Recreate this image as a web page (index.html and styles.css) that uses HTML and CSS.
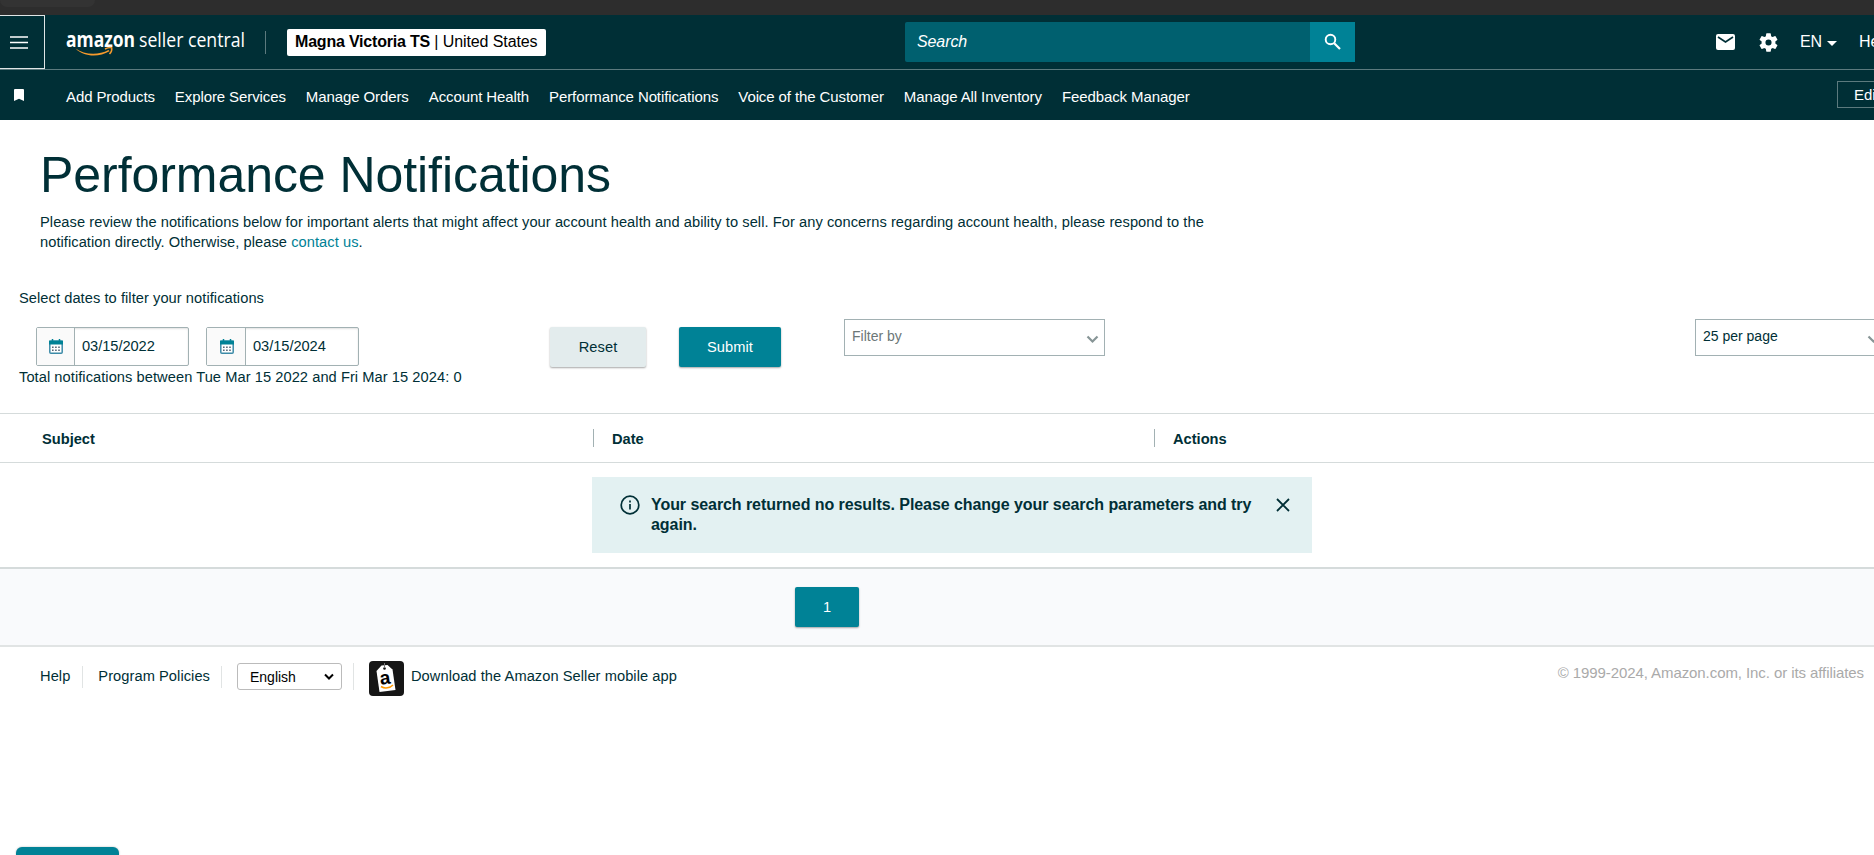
FILE: index.html
```html
<!DOCTYPE html>
<html lang="en">
<head>
    <meta charset="UTF-8">
    <meta name="viewport" content="width=device-width, initial-scale=1.0">
    <title>Performance Notifications</title>
    <link rel="stylesheet" href="styles.css">
</head>
<body>
    <div class="window-bar"><div class="window-tab"></div></div>

    <header>
        <div class="top-bar">
            <button class="menu-btn" aria-label="Menu">
                <svg width="18" height="13" viewBox="0 0 18 13"><path d="M0 1h18M0 6.500h18M0 12h18" stroke="#fff" stroke-width="1.600"/></svg>
            </button>
            <div class="logo">
                <svg width="182" height="34" viewBox="0 0 182 34">
                    <text class="logo-bold" x="0" y="19" textLength="69" lengthAdjust="spacingAndGlyphs">amazon</text>
                    <text class="logo-light" x="73" y="19" textLength="106" lengthAdjust="spacingAndGlyphs">seller central</text>
                    <path d="M9.500 20.500c9 6.500 23 7 33 1.500l1 1.300c-11 6.500-26 5.500-34-2.800z" fill="#f79a2c"/>
                    <path d="M39 21c3-1.500 5.500-1.700 6.700-1.200.4 2-.6 4.500-2.200 6.200" fill="none" stroke="#f79a2c" stroke-width="1.500"/>
                </svg>
            </div>
            <div class="logo-divider"></div>
            <div class="account"><b>Magna Victoria TS</b><span> | United States</span></div>
            <div class="search">
                <div class="search-input">Search</div>
                <button class="search-btn" aria-label="Search">
                    <svg width="18" height="18" viewBox="0 0 18 18" fill="none" stroke="#fff"><circle cx="6.500" cy="6.500" r="4.800" stroke-width="1.900"/><path d="M10.200 10.200l5.800 5.800" stroke-width="2.200"/></svg>
                </button>
            </div>
            <div class="tools">
                <svg class="mail" width="19" height="16" viewBox="0 0 19 16"><rect width="19" height="16" rx="2" fill="#fff"/><path d="M2 3l7.500 5L17 3" fill="none" stroke="#002f36" stroke-width="1.700"/></svg>
                <svg class="gear" width="23" height="23" viewBox="0 0 24 24"><path fill="#fff" d="M19.140 12.940c.04-.3.060-.61.060-.94s-.02-.64-.07-.94l2.030-1.580a.49.49 0 0 0 .12-.61l-1.920-3.320a.49.49 0 0 0-.59-.22l-2.390.96a7 7 0 0 0-1.620-.94l-.36-2.540a.48.48 0 0 0-.48-.41h-3.840a.48.48 0 0 0-.47.41l-.36 2.540c-.59.24-1.130.57-1.620.94l-2.390-.96a.49.49 0 0 0-.59.220L2.740 8.870a.49.49 0 0 0 .12.610l2.030 1.580c-.05.3-.09.63-.09.940s.02.640.070.940l-2.030 1.580a.49.490 0 0 0-.12.610l1.920 3.320c.12.220.37.290.59.220l2.390-.96c.5.380 1.030.7 1.620.940l.36 2.540c.05.24.24.410.480.410h3.840c.24 0 .44-.17.470-.41l.36-2.540c.59-.24 1.130-.56 1.620-.94l2.390.96c.22.080.470 0 .59-.22l1.920-3.320a.49.490 0 0 0-.12-.61zM12 15.200a3.200 3.200 0 1 1 0-6.400 3.200 3.200 0 0 1 0 6.400z"/></svg>
                <span class="lang">EN</span>
                <span class="caret"></span>
                <span class="help">Help</span>
            </div>
        </div>
        <div class="nav-bar">
            <svg class="bookmark" width="10" height="12" viewBox="0 0 10 12"><path d="M0 1q0-1 1-1h8q1 0 1 1v11L5 9.800 0 12z" fill="#fff"/></svg>
            <nav>
                <a>Add Products</a>
                <a>Explore Services</a>
                <a>Manage Orders</a>
                <a>Account Health</a>
                <a>Performance Notifications</a>
                <a>Voice of the Customer</a>
                <a>Manage All Inventory</a>
                <a>Feedback Manager</a>
            </nav>
            <button class="edit-btn">Edit</button>
        </div>
    </header>

    <main>
        <h1>Performance Notifications</h1>
        <p class="intro">Please review the notifications below for important alerts that might affect your account health and ability to sell. For any concerns regarding account health, please respond to the<br>notification directly. Otherwise, please <a>contact us</a>.</p>

        <p class="filter-label">Select dates to filter your notifications</p>
        <div class="filters">
            <div class="date-field">
                <span class="date-icon"><svg width="14" height="15" viewBox="0 0 14 15"><path d="M3.500 0v3M10.500 0v3" stroke="#008296" stroke-width="1.500"/><rect x=".8" y="2.300" width="12.400" height="11.900" rx="1" fill="#fff" stroke="#3d8ba8" stroke-width="1.500"/><path d="M0 1.500h14v4H0z" fill="#008296"/><path d="M3 8.300h8M3 11.200h8" stroke="#567" stroke-width="1.400" stroke-dasharray="1.600 1.500"/></svg></span>
                <span class="date-value">03/15/2022</span>
            </div>
            <div class="date-field date-to">
                <span class="date-icon"><svg width="14" height="15" viewBox="0 0 14 15"><path d="M3.500 0v3M10.500 0v3" stroke="#008296" stroke-width="1.500"/><rect x=".8" y="2.300" width="12.400" height="11.900" rx="1" fill="#fff" stroke="#3d8ba8" stroke-width="1.500"/><path d="M0 1.500h14v4H0z" fill="#008296"/><path d="M3 8.300h8M3 11.200h8" stroke="#567" stroke-width="1.400" stroke-dasharray="1.600 1.500"/></svg></span>
                <span class="date-value">03/15/2024</span>
            </div>
            <button class="btn reset">Reset</button>
            <button class="btn primary submit">Submit</button>
            <div class="dropdown filter-by">
                <span>Filter by</span>
                <svg width="13" height="9" viewBox="0 0 13 9"><path d="M1.500 1.500l5 5 5-5" fill="none" stroke="#879596" stroke-width="2.200"/></svg>
            </div>
            <div class="dropdown per-page">
                <span>25 per page</span>
                <svg width="13" height="9" viewBox="0 0 13 9"><path d="M1.500 1.500l5 5 5-5" fill="none" stroke="#879596" stroke-width="2.200"/></svg>
            </div>
        </div>
        <p class="total">Total notifications between Tue Mar 15 2022 and Fri Mar 15 2024: 0</p>

        <div class="table-head">
            <div class="col">Subject</div>
            <div class="col">Date</div>
            <div class="col">Actions</div>
        </div>
        <div class="table-body">
            <div class="alert">
                <svg class="info" width="20" height="20" viewBox="0 0 20 20" fill="none" stroke="#002f36"><circle cx="10" cy="10" r="8.800" stroke-width="1.700"/><path d="M10 9v5.500M10 5.500v2" stroke-width="1.700"/></svg>
                <p>Your search returned no results. Please change your search parameters and try<br>again.</p>
                <svg class="close" width="14" height="14" viewBox="0 0 14 14"><path d="M1 1l12 12M13 1L1 13" stroke="#002f36" stroke-width="1.800"/></svg>
            </div>
        </div>
        <div class="pagination">
            <button class="btn primary page">1</button>
        </div>
    </main>

    <footer>
        <a class="foot-help">Help</a>
        <a class="foot-policies">Program Policies</a>
        <div class="language">
            <span>English</span>
            <svg width="10" height="8" viewBox="0 0 10 8"><path d="M1 1.500l4 4 4-4" fill="none" stroke="#000" stroke-width="2"/></svg>
        </div>
        <a class="app">
            <svg width="35" height="35" viewBox="0 0 35 35">
                <rect width="35" height="35" rx="4" fill="#161616"/>
                <path d="M7.500 10l5-5.500 6-.5 5 4.500 3 20.500-16 2z" fill="#fff"/>
                <circle cx="15.500" cy="7.500" r="1.300" fill="#161616"/>
                <path d="M15.500 7V2" stroke="#777"/>
                <text class="app-letter" x="11" y="23" transform="rotate(-7 17 20)">a</text>
                <path d="M12 25.500c4 2.500 9 1.500 12-1.500" fill="none" stroke="#f90" stroke-width="1.500"/>
            </svg>
            <span>Download the Amazon Seller mobile app</span>
        </a>
        <span class="copyright">© 1999-2024, Amazon.com, Inc. or its affiliates</span>
    </footer>

    <div class="feedback-tab"></div>
</body>
</html>
```

FILE: styles.css
```css
* {
    margin: 0;
    padding: 0;
    box-sizing: border-box;
}

body {
    font-family: "Liberation Sans", Arial, sans-serif;
    font-size: 14.650px;
    line-height: 20px;
    letter-spacing: 0.060px;
    color: #002f36;
    background: white;
    height: 855px;
    overflow: hidden;
    display: flex;
    flex-direction: column;
}

button {
    font: inherit;
    letter-spacing: inherit;
    border: none;
}

svg {
    display: block;
    flex-shrink: 0;
}

.window-bar {
    height: 15px;
    background: #2d2d2d;
}

.window-tab {
    width: 95px;
    height: 7px;
    background: #333;
    border-radius: 0 0 8px 8px;
}

header {
    height: 105px;
    background: #002f36;
    color: white;
    white-space: nowrap;
}

.top-bar {
    height: 55px;
    display: flex;
    border-bottom: 1px solid #5c7a7e;
    font-size: 16px;
    letter-spacing: -0.100px;
}

.top-bar > * {
    flex-shrink: 0;
}

.menu-btn {
    width: 45px;
    height: 54px;
    padding: 0 0 0 10px;
    display: flex;
    align-items: center;
    background: #002f36;
    border: 1px solid #dfe5e6;
    border-left: none;
}

.logo {
    margin: 13px 0 0 21px;
}

.logo text {
    fill: white;
    font-family: "Open Sans", sans-serif;
    font-size: 20.500px;
    letter-spacing: 0;
}

.logo .logo-bold {
    font-weight: 700;
}

.logo-divider {
    width: 1px;
    height: 23px;
    margin: 16px 0 0 17px;
    background: #5c7a7e;
}

.account {
    width: 259px;
    height: 27px;
    margin: 14px 0 0 21px;
    padding-left: 8px;
    line-height: 25px;
    color: black;
    background: white;
    border-radius: 2px;
}

.account b {
    letter-spacing: -0.200px;
}

.search {
    width: 450px;
    height: 40px;
    margin: 7px 0 0 359px;
    display: flex;
}

.search-input {
    width: 405px;
    padding-left: 12px;
    line-height: 39px;
    font-style: italic;
    background: #00606f;
    border-radius: 2px 0 0 2px;
}

.search-btn {
    width: 45px;
    display: flex;
    align-items: center;
    justify-content: center;
    background: #008296;
}

.tools {
    height: 54px;
    margin-left: 361px;
    display: flex;
    align-items: center;
}

.gear {
    margin-left: 22px;
}

.lang {
    margin-left: 20px;
}

.caret {
    margin: 2px 22px 0 5px;
    border: 5px solid transparent;
    border-top-color: white;
    border-bottom: none;
}

.nav-bar {
    height: 50px;
    display: flex;
    font-size: 15px;
    letter-spacing: -0.100px;
}

.bookmark {
    margin: 19px 42px 0 14px;
}

nav {
    display: flex;
    gap: 20px;
    line-height: 54px;
}

.edit-btn {
    width: 70px;
    height: 27px;
    margin: 11px -33px 0 auto;
    padding-left: 16px;
    text-align: left;
    color: white;
    background: transparent;
    border: 1px solid #5c7a7e;
}

h1 {
    margin: 24px 0 0 40px;
    font-size: 50px;
    font-weight: 400;
    line-height: 62px;
    letter-spacing: -0.060px;
}

.intro {
    margin: 6px 0 0 40px;
}

.intro a {
    color: #008296;
}

.filter-label {
    margin: 36px 0 0 19px;
}

.filters {
    height: 59px;
    padding: 19px 0 0 36px;
    display: flex;
    white-space: nowrap;
}

.filters > * {
    flex-shrink: 0;
}

.date-field {
    width: 153px;
    height: 39px;
    margin-right: 17px;
    display: flex;
    border: 1px solid #a2b1b3;
    border-radius: 2px;
    box-shadow: inset 0 1px 2px rgba(0, 0, 0, 0.12);
}

.date-icon {
    width: 38px;
    display: flex;
    align-items: center;
    justify-content: center;
    background: #fafafa;
    border-right: 1px solid #a2b1b3;
}

.date-to .date-icon {
    width: 39px;
    padding-left: 1px;
}

.date-value {
    padding-left: 7px;
    line-height: 37px;
    letter-spacing: -0.050px;
}

.btn {
    height: 40px;
    color: #002f36;
    background: #e3eced;
    border-radius: 2px;
    box-shadow: 0 1px 2px rgba(0, 0, 0, 0.35);
}

.btn.primary {
    color: white;
    background: #008296;
}

.reset {
    width: 96px;
    margin-left: 174px;
}

.submit {
    width: 102px;
    margin-left: 33px;
}

.dropdown {
    height: 37px;
    margin-top: -8px;
    padding: 0 5px 0 7px;
    display: flex;
    justify-content: space-between;
    font-size: 14px;
    line-height: 33px;
    letter-spacing: 0;
    border: 1px solid #a2b1b3;
}

.dropdown svg {
    margin-top: 15px;
}

.filter-by {
    width: 261px;
    margin-left: 63px;
    color: #6c7778;
}

.per-page {
    width: 191px;
    margin-left: 590px;
}

.total {
    margin: 0 0 26px 19px;
}

.table-head {
    height: 50px;
    padding-top: 15px;
    display: flex;
    font-weight: 700;
    letter-spacing: 0;
    border-top: 1px solid #d5dbdb;
    border-bottom: 1px solid #d5dbdb;
}

.col {
    width: 561px;
    height: 18px;
    padding-left: 18px;
    border-left: 1px solid #a2b1b3;
}

.col:first-child {
    width: 593px;
    padding-left: 42px;
    border-left: none;
}

.table-body {
    height: 104px;
    padding: 14px 0 0 592px;
}

.alert {
    width: 720px;
    height: 76px;
    padding: 18px 22px 0 28px;
    display: flex;
    font-size: 16px;
    font-weight: 700;
    letter-spacing: -0.065px;
    background: #e3f1f2;
}

.alert p {
    margin: 0 auto 0 11px;
    white-space: nowrap;
}

.close {
    margin-top: 3px;
}

.pagination {
    height: 80px;
    padding: 18px 0 0 795px;
    background: #f9fafc;
    border-top: 2px solid #d5dbdb;
    border-bottom: 2px solid #e1e4e4;
}

.page {
    width: 64px;
}

footer {
    height: 60px;
    padding: 14px 10px 0 40px;
    display: flex;
    align-items: flex-start;
    white-space: nowrap;
}

.foot-help,
.foot-policies {
    height: 22px;
    margin-top: 5px;
    padding-right: 12px;
    border-right: 1px solid #e1e4e4;
}

.foot-policies {
    margin-left: 15px;
    padding-right: 11px;
}

.language {
    width: 105px;
    height: 27px;
    margin: 2px 11px 0 15px;
    padding: 0 7px 0 12px;
    display: flex;
    align-items: center;
    justify-content: space-between;
    color: black;
    font-size: 14px;
    letter-spacing: 0;
    border: 1px solid #bbb;
    border-radius: 3px;
}

.app {
    padding-left: 16px;
    display: flex;
    position: relative;
}

/* separator between the language select and the app link */
.app::before {
    content: '';
    position: absolute;
    left: 0;
    top: 2px;
    width: 1px;
    height: 27px;
    background: #e1e4e4;
}

.app span {
    margin: 5px 0 0 7px;
}

.app-letter {
    font-size: 19px;
    font-weight: 700;
}

.copyright {
    margin: 2px 0 0 auto;
    font-size: 15px;
    letter-spacing: -0.080px;
    color: #aaa;
}

.feedback-tab {
    width: 103px;
    height: 8px;
    margin: auto 0 0 16px;
    background: #008296;
    border-radius: 6px 6px 0 0;
    box-shadow: 0 0 2px rgba(0, 0, 0, 0.3);
}
```
